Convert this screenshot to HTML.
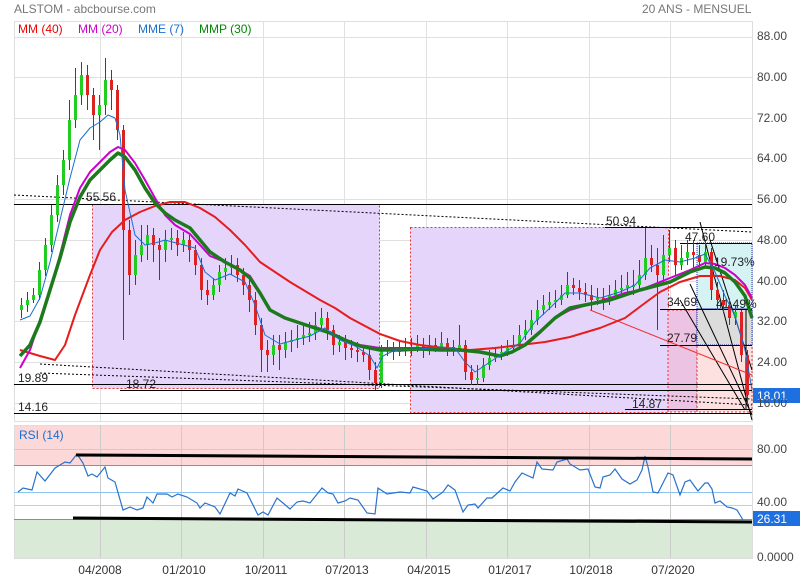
<!DOCTYPE html>
<html><head><meta charset="utf-8"><style>
body{margin:0;background:#fff;width:800px;height:580px;overflow:hidden;font-family:"Liberation Sans",sans-serif}
svg text{font-family:"Liberation Sans",sans-serif}
</style></head><body>
<svg width="800" height="580" xmlns="http://www.w3.org/2000/svg">
<text x="14" y="13" font-size="12" fill="#777">ALSTOM - abcbourse.com</text>
<text x="642" y="13" font-size="12" fill="#777">20 ANS - MENSUEL</text>
<rect x="14.5" y="21.5" width="738" height="400" fill="#fff" stroke="#ddd"/>
<g stroke="#e0e0e0" stroke-width="1">
<line x1="14" y1="37.5" x2="752" y2="37.5"/>
<line x1="14" y1="77.5" x2="752" y2="77.5"/><line x1="14" y1="118.5" x2="752" y2="118.5"/>
<line x1="14" y1="158.5" x2="752" y2="158.5"/><line x1="14" y1="199.5" x2="752" y2="199.5"/>
<line x1="14" y1="240.5" x2="752" y2="240.5"/><line x1="14" y1="281.5" x2="752" y2="281.5"/>
<line x1="14" y1="321.5" x2="752" y2="321.5"/><line x1="14" y1="362.5" x2="752" y2="362.5"/>
<line x1="14" y1="403.5" x2="752" y2="403.5"/>
<line x1="100.5" y1="21" x2="100.5" y2="421"/><line x1="181.5" y1="21" x2="181.5" y2="421"/>
<line x1="263.5" y1="21" x2="263.5" y2="421"/><line x1="344.5" y1="21" x2="344.5" y2="421"/>
<line x1="426.5" y1="21" x2="426.5" y2="421"/><line x1="507.5" y1="21" x2="507.5" y2="421"/>
<line x1="589.5" y1="21" x2="589.5" y2="421"/><line x1="670.5" y1="21" x2="670.5" y2="421"/>
</g>
<text x="18" y="33" font-size="12" fill="#e00">MM (40)</text>
<text x="78" y="33" font-size="12" fill="#c0c">MM (20)</text>
<text x="138" y="33" font-size="12" fill="#1a6fd0">MME (7)</text>
<text x="199" y="33" font-size="12" fill="#080">MMP (30)</text>
<rect x="92.5" y="204.5" width="287" height="184" fill="#e5d5fb" stroke="#e33" stroke-dasharray="2,2"/>
<rect x="410.5" y="227.5" width="258" height="185" fill="#e5d5fb" stroke="#e33" stroke-dasharray="2,2"/>
<rect x="668" y="310" width="29" height="102" fill="#ecc3e3" stroke="#e33" stroke-dasharray="2,2"/>
<rect x="697" y="310" width="55" height="102" fill="#fde0e0" stroke="#e33" stroke-dasharray="2,2"/>
<rect x="697" y="243" width="55" height="66" fill="#d6f3f3" stroke="#23a" stroke-dasharray="1,1"/>
<rect x="697" y="309" width="55" height="36" fill="#dcdcdc" stroke="#23a" stroke-dasharray="1,1"/>
<g stroke="#000" stroke-width="1" fill="none">
<line x1="14" y1="204.5" x2="752" y2="204.5"/>
<line x1="605" y1="227.5" x2="752" y2="227.5"/>
<line x1="680" y1="243.5" x2="752" y2="243.5"/>
<line x1="660" y1="309.5" x2="752" y2="309.5"/>
<line x1="660" y1="345.5" x2="752" y2="345.5"/>
<line x1="14" y1="384.5" x2="752" y2="384.5"/>
<line x1="120" y1="390.5" x2="752" y2="390.5"/>
<line x1="625" y1="409.5" x2="752" y2="409.5"/>
<line x1="14" y1="413.5" x2="752" y2="413.5"/>
<g stroke-dasharray="2,2"><line x1="14" y1="195" x2="752" y2="232"/><line x1="40" y1="364" x2="752" y2="405"/><line x1="40" y1="373" x2="752" y2="399"/></g>
<line x1="700" y1="222" x2="752" y2="420"/><line x1="710" y1="240" x2="752" y2="370"/>
<line x1="690" y1="284" x2="752" y2="415"/><line x1="680" y1="300" x2="745" y2="410"/>
<line x1="746" y1="309" x2="746" y2="410"/>
</g>
<line x1="590" y1="310" x2="752" y2="375" stroke="#e33"/>
<!-- candles -->
<path fill="none" stroke="#444" stroke-width="1" d="M21.5 298V318M27.5 292V312M33.5 288V303M39.5 262V300M45.5 238V276M51.5 205V252M57.5 175V222M63.5 150V195M69.5 100V170M75.5 68V128M81.5 62V105M87.5 65V110M93.5 88V140M99.5 95V150M105.5 58V115M111.5 70V110M117.5 85V140M123.5 125V340M129.5 220V295M135.5 240V285M141.5 225V262M147.5 225V260M153.5 228V262M159.5 238V280M165.5 230V262M171.5 228V250M177.5 230V256M183.5 232V252M189.5 235V262M195.5 245V275M201.5 258V300M207.5 280V305M213.5 278V300M219.5 265V292M225.5 258V280M231.5 255V275M237.5 258V282M243.5 268V295M249.5 278V312M255.5 292V335M261.5 318V372M267.5 340V372M273.5 335V365M279.5 335V370M285.5 332V358M291.5 330V352M297.5 325V348M303.5 325V345M309.5 322V342M315.5 312V340M321.5 308V332M327.5 312V340M333.5 325V355M339.5 335V352M345.5 335V360M351.5 340V358M357.5 342V362M363.5 345V362M369.5 348V380M375.5 362V390M381.5 345V388M387.5 340V356M393.5 342V360M399.5 340V356M405.5 338V356M411.5 338V356M417.5 335V352M423.5 338V358M429.5 335V355M435.5 338V352M441.5 332V350M447.5 338V356M453.5 340V356M459.5 325V352M465.5 340V380M471.5 365V385M477.5 365V385M483.5 358V382M489.5 350V370M495.5 348V362M501.5 345V360M507.5 340V356M513.5 335V352M519.5 325V350M525.5 320V340M531.5 310V335M537.5 300V325M543.5 295V315M549.5 292V310M555.5 290V308M561.5 285V305M567.5 272V298M573.5 278V295M579.5 280V300M585.5 283V302M591.5 285V310M597.5 288V305M603.5 288V310M609.5 285V305M615.5 280V300M621.5 275V298M627.5 272V295M633.5 270V295M639.5 260V290M645.5 228V280M651.5 245V272M657.5 248V330M663.5 235V285M669.5 230V262M675.5 240V275M681.5 245V270M687.5 240V265M693.5 240V268M699.5 245V270M705.5 240V268M711.5 248V300M717.5 282V310M723.5 290V312M729.5 298V325M735.5 305V325M741.5 310V362M747.5 350V405"/>
<path fill="#22cc22" d="M20 305h3v5h-3zM26 300h3v5h-3zM32 295h3v5h-3zM38 270h3v25h-3zM44 245h3v25h-3zM50 215h3v30h-3zM56 185h3v30h-3zM62 160h3v25h-3zM68 120h3v40h-3zM74 95h3v25h-3zM80 75h3v20h-3zM98 105h3v10h-3zM104 80h3v25h-3zM134 255h3v20h-3zM140 245h3v10h-3zM146 235h3v10h-3zM164 240h3v10h-3zM170 238h3v2h-3zM182 240h3v5h-3zM212 285h3v10h-3zM218 272h3v13h-3zM224 268h3v4h-3zM230 265h3v3h-3zM272 345h3v10h-3zM284 342h3v8h-3zM290 340h3v2h-3zM296 338h3v2h-3zM302 335h3v3h-3zM308 333h3v2h-3zM314 325h3v8h-3zM320 318h3v7h-3zM338 342h3v3h-3zM380 350h3v33h-3zM386 348h3v2h-3zM398 348h3v4h-3zM410 347h3v3h-3zM416 345h3v2h-3zM428 345h3v5h-3zM440 343h3v4h-3zM458 345h3v5h-3zM476 378h3v2h-3zM482 365h3v13h-3zM488 358h3v7h-3zM494 355h3v3h-3zM500 352h3v3h-3zM506 348h3v4h-3zM512 345h3v3h-3zM518 335h3v10h-3zM524 330h3v5h-3zM530 320h3v10h-3zM536 310h3v10h-3zM542 305h3v5h-3zM548 302h3v3h-3zM554 300h3v2h-3zM560 295h3v5h-3zM566 285h3v10h-3zM596 298h3v2h-3zM608 295h3v5h-3zM614 290h3v5h-3zM620 288h3v2h-3zM626 285h3v3h-3zM632 285h3v2h-3zM638 275h3v10h-3zM644 258h3v17h-3zM662 255h3v20h-3zM668 248h3v7h-3zM680 258h3v7h-3zM686 252h3v6h-3zM704 252h3v10h-3zM734 312h3v6h-3z"/>
<path fill="#dd2222" d="M86 75h3v20h-3zM92 95h3v20h-3zM110 80h3v10h-3zM116 90h3v40h-3zM122 130h3v100h-3zM128 230h3v45h-3zM152 235h3v10h-3zM158 245h3v5h-3zM176 238h3v7h-3zM188 240h3v10h-3zM194 250h3v15h-3zM200 265h3v25h-3zM206 290h3v5h-3zM236 265h3v10h-3zM242 275h3v10h-3zM248 285h3v15h-3zM254 300h3v25h-3zM260 325h3v25h-3zM266 350h3v5h-3zM278 345h3v5h-3zM326 318h3v12h-3zM332 330h3v15h-3zM344 342h3v6h-3zM350 348h3v2h-3zM356 350h3v2h-3zM362 352h3v3h-3zM368 355h3v15h-3zM374 370h3v13h-3zM392 348h3v4h-3zM404 348h3v2h-3zM422 345h3v5h-3zM434 345h3v2h-3zM446 343h3v4h-3zM452 347h3v3h-3zM464 345h3v27h-3zM470 372h3v8h-3zM572 285h3v3h-3zM578 288h3v4h-3zM584 292h3v3h-3zM590 295h3v5h-3zM602 298h3v2h-3zM650 258h3v7h-3zM656 265h3v10h-3zM674 248h3v17h-3zM692 252h3v3h-3zM698 255h3v7h-3zM710 252h3v38h-3zM716 290h3v10h-3zM722 300h3v5h-3zM728 305h3v13h-3zM740 312h3v43h-3zM746 355h3v40h-3z"/>
<polyline fill="none" stroke="#e51d1d" stroke-width="2" stroke-linejoin="round" points="20,350 40,356 55,360 65,345 75,315 90,275 100,250 112,232 125,220 140,212 155,206 170,202 185,202 200,208 215,217 230,230 245,245 260,262 275,272 290,282 305,291 320,300 335,308 350,318 365,326 380,334 400,341 420,345 445,348 470,350 495,348 520,345 545,342 570,337 600,328 625,318 645,303 660,292 680,282 700,276 720,276 735,280 745,288 752,300"/>
<polyline fill="none" stroke="#c0c" stroke-width="2" stroke-linejoin="round" points="20,368 30,350 40,320 50,290 60,255 70,215 80,188 90,172 100,162 110,152 118,147 125,150 135,163 145,180 155,198 165,215 175,225 190,234 200,245 210,256 225,262 240,270 250,276 260,292 270,310 285,318 300,323 315,327 330,332 345,340 360,345 380,348 400,348 420,348 440,348 460,350 480,352 500,356 512,352 525,345 540,332 555,318 570,310 590,304 610,298 625,293 640,290 655,284 670,278 690,270 705,263 715,264 725,268 735,275 745,285 752,298"/>
<polyline fill="none" stroke="#1c7a1c" stroke-width="3.5" stroke-linejoin="round" points="20,356 30,345 40,322 50,290 60,258 70,222 80,197 90,180 100,170 110,160 118,153 125,157 135,170 145,188 155,203 165,213 175,220 190,228 200,240 210,252 225,262 240,270 250,278 260,293 270,310 285,318 300,323 315,328 330,333 345,340 360,346 380,350 400,350 420,349 440,350 460,350 480,352 500,356 512,352 525,345 540,332 555,318 570,308 590,304 610,300 625,295 640,290 655,286 670,282 690,272 705,267 715,268 725,273 735,282 745,296 752,318"/>
<polyline fill="none" stroke="#1a6fd0" stroke-width="1" stroke-linejoin="round" points="20,320 30,316 40,298 50,262 60,220 70,178 80,140 90,128 100,122 108,115 115,118 120,135 125,190 135,235 145,245 155,243 165,240 180,244 195,248 205,272 215,280 230,274 245,282 255,305 265,335 280,344 295,340 310,336 325,328 340,340 355,346 370,356 377,368 383,356 395,350 420,349 440,347 455,348 465,362 475,372 490,362 505,352 520,343 535,322 550,308 565,293 580,293 600,298 620,292 635,285 650,268 665,260 680,262 695,258 705,254 715,272 725,296 735,316 745,350 752,390"/>
<rect x="753" y="388" width="47" height="15" fill="#1e6fe0"/>
<text x="757" y="400" font-size="12" fill="#fff">18.01</text>
<g font-size="12" fill="#222">
<text x="86" y="201">55.56</text><text x="606" y="225">50.94</text><text x="685" y="241">47.60</text>
<text x="667" y="306">34.69</text><text x="667" y="342">27.79</text><text x="18" y="382">19.89</text>
<text x="126" y="388">18.72</text><text x="18" y="411">14.16</text><text x="632" y="408">14.87</text>
<text x="714" y="266">19.73%</text><text x="716" y="308">41.49%</text>
</g>
<g font-size="12" fill="#444">
<text x="757" y="40">88.00</text><text x="757" y="81">80.00</text><text x="757" y="122">72.00</text>
<text x="757" y="162">64.00</text><text x="757" y="203">56.00</text><text x="757" y="244">48.00</text>
<text x="757" y="285">40.00</text><text x="757" y="325">32.00</text><text x="757" y="366">24.00</text>
<text x="757" y="407">16.00</text>
</g>
<rect x="14" y="425" width="738" height="40" fill="#fdd8d8"/>
<rect x="14" y="519" width="738" height="39" fill="#d9ead7"/>
<rect x="14.5" y="425.5" width="738" height="133" fill="none" stroke="#ddd"/>
<g stroke="#ccc"><line x1="14" y1="449.5" x2="752" y2="449.5"/><line x1="14" y1="505.5" x2="752" y2="505.5"/>
<line x1="100.5" y1="425" x2="100.5" y2="558"/><line x1="181.5" y1="425" x2="181.5" y2="558"/>
<line x1="263.5" y1="425" x2="263.5" y2="558"/><line x1="344.5" y1="425" x2="344.5" y2="558"/>
<line x1="426.5" y1="425" x2="426.5" y2="558"/><line x1="507.5" y1="425" x2="507.5" y2="558"/>
<line x1="589.5" y1="425" x2="589.5" y2="558"/><line x1="670.5" y1="425" x2="670.5" y2="558"/></g>
<line x1="14" y1="465.5" x2="752" y2="465.5" stroke="#e66"/>
<line x1="14" y1="492.5" x2="752" y2="492.5" stroke="#8cc4f4"/>
<line x1="14" y1="519.5" x2="752" y2="519.5" stroke="#6a6"/>
<text x="19" y="439" font-size="12" fill="#1a6fd0">RSI (14)</text>
<polyline fill="none" stroke="#2a72cc" stroke-width="1.2" points="18,492 23,488 32,490 37,472 45,481 55,468 65,462 70,463 77,454 83,463 88,476 92,474 97,477 105,467 108,478 115,482 123,510 130,507 137,510 143,508 147,497 153,503 157,494 167,494 172,497 178,494 187,497 197,503 200,508 205,503 215,507 220,514 230,493 235,496 238,489 247,493 258,515 263,512 268,515 277,498 283,503 290,509 297,502 303,501 310,503 322,488 328,493 333,494 338,503 345,501 350,498 358,500 367,513 375,514 378,488 387,494 400,492 410,493 413,487 427,491 433,499 443,492 448,485 455,490 463,512 468,505 475,504 478,508 487,498 492,498 503,488 510,491 515,482 522,473 533,478 537,462 542,469 553,470 557,462 567,459 570,464 580,470 588,469 595,487 600,488 603,477 610,475 615,469 622,479 630,484 637,480 642,470 645,456 648,467 653,492 658,493 668,473 673,475 680,495 685,482 690,480 698,491 705,483 708,483 712,489 715,503 720,501 727,507 732,508 737,510 743,520"/>
<line x1="76" y1="455" x2="752" y2="459" stroke="#000" stroke-width="3"/>
<line x1="73" y1="518" x2="752" y2="522" stroke="#000" stroke-width="3"/>
<rect x="753" y="511" width="47" height="15" fill="#1e6fe0"/>
<text x="757" y="523" font-size="12" fill="#fff">26.31</text>
<g font-size="12" fill="#444"><text x="757" y="453">80.00</text><text x="757" y="506">40.00</text><text x="757" y="561">0.0000</text></g>
<g font-size="12" fill="#333" text-anchor="middle">
<text x="100" y="574">04/2008</text><text x="184" y="574">01/2010</text><text x="266" y="574">10/2011</text>
<text x="347" y="574">07/2013</text><text x="429" y="574">04/2015</text><text x="510" y="574">01/2017</text>
<text x="591" y="574">10/2018</text><text x="673" y="574">07/2020</text>
</g>
</svg>
</body></html>
